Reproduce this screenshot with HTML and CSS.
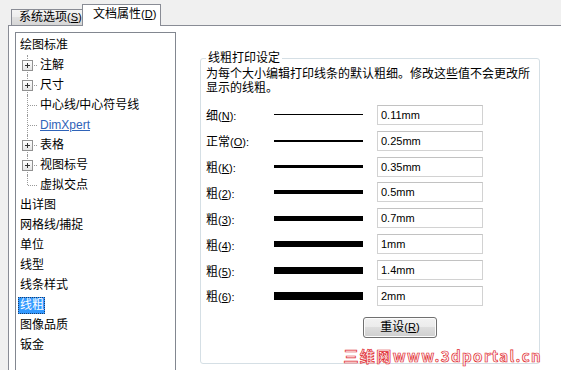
FILE: index.html
```html
<!DOCTYPE html>
<html lang="zh-CN">
<head>
<meta charset="utf-8">
<title>文档属性 - 线粗</title>
<link rel="stylesheet" href="styles.css">
</head>
<body>
<div class="window">
  <div class="tabs">
    <div class="tab">系统选项<span class="mn">(<u>S</u>)</span></div>
    <div class="tab active">文档属性<span class="mn">(<u>D</u>)</span></div>
  </div>
  <div class="page">
    <div class="tree">
      <div class="item">绘图标准</div>
      <div class="kids">
        <div class="item child"><span class="twig plus"></span>注解</div>
        <div class="item child"><span class="twig plus"></span>尺寸</div>
        <div class="item child"><span class="twig"></span>中心线/中心符号线</div>
        <div class="item child"><span class="twig"></span><span class="link">DimXpert</span></div>
        <div class="item child"><span class="twig plus"></span>表格</div>
        <div class="item child"><span class="twig plus"></span>视图标号</div>
        <div class="item child last"><span class="twig"></span>虚拟交点</div>
      </div>
      <div class="item">出详图</div>
      <div class="item">网格线/捕捉</div>
      <div class="item">单位</div>
      <div class="item">线型</div>
      <div class="item">线条样式</div>
      <div class="item"><span class="sel">线粗</span></div>
      <div class="item">图像品质</div>
      <div class="item">钣金</div>
    </div>
    <fieldset class="group">
      <legend>线粗打印设定</legend>
      <p class="desc">为每个大小编辑打印线条的默认粗细。修改这些值不会更改所显示的线粗。</p>
      <div class="rows">
        <div class="row"><span class="label">细<span class="mn">(<u>N</u>):</span></span><span class="line w1"></span><span class="field">0.11mm</span></div>
        <div class="row"><span class="label">正常<span class="mn">(<u>O</u>):</span></span><span class="line w2"></span><span class="field">0.25mm</span></div>
        <div class="row"><span class="label">粗<span class="mn">(<u>K</u>):</span></span><span class="line w3"></span><span class="field">0.35mm</span></div>
        <div class="row"><span class="label">粗<span class="mn">(<u>2</u>):</span></span><span class="line w4"></span><span class="field">0.5mm</span></div>
        <div class="row"><span class="label">粗<span class="mn">(<u>3</u>):</span></span><span class="line w5"></span><span class="field">0.7mm</span></div>
        <div class="row"><span class="label">粗<span class="mn">(<u>4</u>):</span></span><span class="line w6"></span><span class="field">1mm</span></div>
        <div class="row"><span class="label">粗<span class="mn">(<u>5</u>):</span></span><span class="line w7"></span><span class="field">1.4mm</span></div>
        <div class="row"><span class="label">粗<span class="mn">(<u>6</u>):</span></span><span class="line w8"></span><span class="field">2mm</span></div>
      </div>
      <div class="actions"><button class="btn">重设<span class="mn">(<u>R</u>)</span></button></div>
    </fieldset>
  </div>
  <div class="watermark">三维网www.3dportal.cn</div>
</div>
</body>
</html>
```
FILE: styles.css
```css
* { box-sizing: border-box; }
html, body { margin: 0; padding: 0; }
body {
  background: #f0f0f0;
  font-family: "Liberation Sans", "Noto Sans CJK SC", sans-serif;
  font-size: 12px;
  color: #000;
  overflow: hidden;
}
.window {
  position: relative;
  width: 561px;
  height: 370px;
  overflow: hidden;
  display: flex;
  flex-direction: column;
}
.mn { font-size: 11px; }
.mn u { text-decoration: underline; text-underline-offset: 1px; }

/* tabs */
.tabs {
  flex: none;
  height: 25px;
  display: flex;
  align-items: flex-end;
  padding-left: 11px;
}
.tab {
  height: 16px;
  width: 72px;
  padding-left: 7px;
  line-height: 15px;
  border: 1px solid #898c95;
  border-bottom: none;
  background: linear-gradient(#f4f4f4, #ececec 50%, #e0e0e0 50%, #d6d6d6);
  white-space: nowrap;
}
.tab.active {
  position: relative;
  z-index: 1;
  height: 22px;
  width: 79px;
  margin-left: -1px;
  margin-bottom: -1px;
  padding-left: 10px;
  line-height: 19px;
  background: #fff;
}

/* page */
.page {
  flex: none;
  height: 345px;
  margin-left: 8px;
  border-left: 1px solid #898c95;
  border-top: 1px solid #898c95;
  background: #fff;
  display: flex;
  align-items: flex-start;
  padding: 6px 0 0 6px;
}

/* tree */
.tree {
  width: 161px;
  height: 360px;
  flex: none;
  border: 1px solid #828790;
  padding: 2px 0 0 4px;
}
.item {
  height: 20px;
  line-height: 20px;
  white-space: nowrap;
  display: flex;
  align-items: center;
}
.kids { position: relative; z-index: 0; }
.twig {
  position: relative;
  width: 20px;
  height: 20px;
  flex: none;
}
.twig::before {
  content: "";
  position: absolute;
  z-index: -1;
  left: 7px;
  top: 0;
  height: 20px;
  border-left: 1px dotted #9a9a9a;
}
.item.last .twig::before { height: 10px; }
.twig::after {
  content: "";
  position: absolute;
  left: 8px;
  top: 10px;
  width: 9px;
  border-top: 1px dotted #9a9a9a;
}
.twig.plus::after {
  left: 12px;
  width: 5px;
}
.twig.plus {
  background:
    linear-gradient(#333, #333) 5px 10px / 5px 1px no-repeat,
    linear-gradient(#333, #333) 7px 8px / 1px 5px no-repeat,
    linear-gradient(#fff, #e4e4e4) 3px 6px / 9px 9px no-repeat,
    linear-gradient(#919191, #919191) 2px 5px / 11px 11px no-repeat;
}
.link {
  color: #2f63b8;
  text-decoration: underline;
  text-underline-offset: 1px;
}
.sel {
  display: inline-block;
  margin-left: -2px;
  padding: 0 1px 0 2px;
  line-height: 17px;
  background: #3399ff;
  color: #fff;
  outline: 1px dotted #1b3e6e;
  outline-offset: -1px;
}

/* group box */
.group {
  margin: 19px 0 0 24px;
  width: 340px;
  height: 313px;
  min-inline-size: 0;
  border: 1px solid #d5dfe5;
  border-radius: 3px;
  padding: 0 5px;
}
.group legend {
  padding: 0 2px;
  line-height: 14px;
  margin-left: 0;
}
.desc {
  margin: 2px 0 0;
  line-height: 14px;
  width: 330px;
}
.rows {
  margin-top: 7px;
  display: flex;
  flex-direction: column;
}
.row {
  height: 26px;
  display: flex;
  align-items: center;
  margin-top: -0.15px;
}
.label {
  width: 68px;
  white-space: nowrap;
}
.line {
  width: 89px;
  background: #000;
}
.w1 { height: 1px; }
.w2 { height: 2px; }
.w3 { height: 3px; }
.w4 { height: 4px; }
.w5 { height: 5px; }
.w6 { height: 6px; }
.w7 { height: 7px; }
.w8 { height: 8px; }
.field {
  margin-left: 14px;
  width: 106px;
  height: 20px;
  padding-left: 3px;
  line-height: 18px;
  font-size: 11px;
  border: 1px solid #d2d2d2;
  border-top-color: #c2c2c2;
  background: #fff;
}
.actions {
  margin-top: 8px;
  padding-left: 157px;
}
.btn {
  width: 74px;
  height: 21px;
  padding: 0;
  font-family: inherit;
  font-size: 12px;
  line-height: 19px;
  color: #000;
  border: 1px solid #707070;
  border-radius: 3px;
  background: linear-gradient(#f2f2f2, #ebebeb 50%, #dddddd 50%, #cfcfcf);
  box-shadow: inset 0 0 0 1px #fcfcfc;
}

/* watermark */
.watermark {
  position: absolute;
  right: 19px;
  bottom: 6px;
  font-family: "Noto Sans CJK SC", "Liberation Sans", sans-serif;
  font-weight: bold;
  font-size: 15px;
  line-height: 16px;
  letter-spacing: 1.4px;
  color: #fff4f4;
  -webkit-text-stroke: 0.7px #e0282e;
  white-space: nowrap;
}
```
